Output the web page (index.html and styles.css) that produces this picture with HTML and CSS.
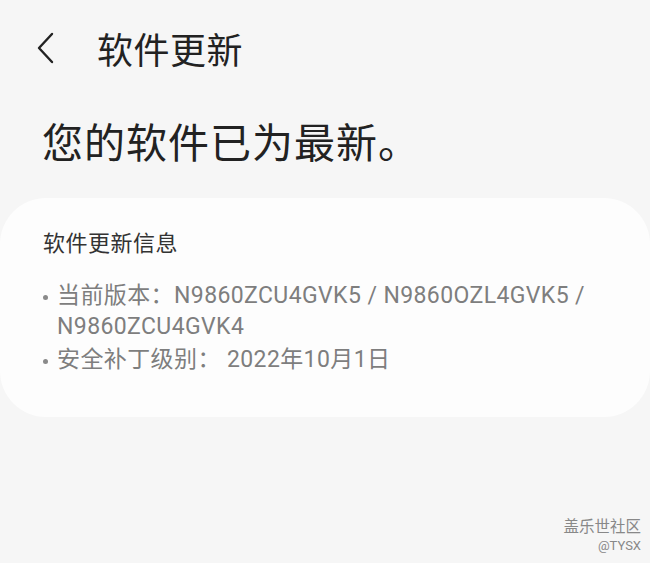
FILE: index.html
```html
<!DOCTYPE html>
<html lang="zh-CN">
<head>
    <meta charset="UTF-8">
    <meta name="viewport" content="width=device-width, initial-scale=1.0">
    <title>软件更新</title>
    <link rel="stylesheet" href="styles.css">
</head>
<body>

    <div class="screen">
        <header class="top-bar">
            <span class="back">
                <svg width="20" height="32" viewBox="0 0 20 32">
                    <path d="M16 2 L3 16 L16 30" fill="none" stroke="#222" stroke-width="2.4" stroke-linecap="round" stroke-linejoin="round"/>
                </svg>
            </span>
            <h1>软件更新</h1>
        </header>

        <p class="status">您的软件已为最新。</p>

        <section class="card">
            <h2>软件更新信息</h2>
            <ul class="info">
                <li>当前版本：N9860ZCU4GVK5 / N9860OZL4GVK5 / N9860ZCU4GVK4</li>
                <li>安全补丁级别： 2022年10月1日</li>
            </ul>
        </section>

        <div class="watermark">
            <span class="wm-name">盖乐世社区</span>
            <span class="wm-id">@TYSX</span>
        </div>
    </div>

</body>
</html>
```
FILE: styles.css
```css
body {
    margin: 0;
    padding: 0;
    background: #f6f6f6;
    font-family: Roboto, "Noto Sans CJK SC", sans-serif;
    color: #222;
}

.screen {
    width: 650px;
    height: 563px;
    display: flex;
    flex-direction: column;
    overflow: hidden;
}

.top-bar {
    display: flex;
    align-items: center;
    height: 96px;
    padding-left: 36px;
    box-sizing: border-box;
}

.back {
    display: flex;
    width: 61px;
}

h1 {
    margin: 0;
    font-size: 36px;
    font-weight: 400;
    letter-spacing: 0.5px;
}

.status {
    margin: 0;
    padding: 0 0 0 42px;
    font-size: 41px;
    letter-spacing: 1px;
    line-height: 96px;
    height: 102px;
}

.card {
    background: #fdfdfd;
    border-radius: 46px;
    padding: 30px 30px 34px 43px;
    height: 219px;
    box-sizing: border-box;
}

h2 {
    margin: 0 0 20px 0;
    font-size: 22px;
    font-weight: 400;
    letter-spacing: 0.5px;
    color: #333;
    line-height: 32px;
}

.info {
    list-style: none;
    margin: 0;
    padding: 0;
}

.info li {
    position: relative;
    padding-left: 14px;
    font-size: 23px;
    letter-spacing: 0.4px;
    line-height: 31px;
    color: #7e7e7e;
    margin-bottom: 2px;
}

.info li::before {
    content: "";
    position: absolute;
    left: 0;
    top: 15px;
    width: 5px;
    height: 5px;
    border-radius: 50%;
    background: #8a8a8a;
}

.watermark {
    margin-top: auto;
    display: flex;
    flex-direction: column;
    align-items: flex-end;
    padding: 0 9px 8px 0;
    color: #888;
}

.wm-name {
    font-size: 15.5px;
    line-height: 20px;
}

.wm-id {
    font-size: 13px;
    line-height: 18px;
}
```
